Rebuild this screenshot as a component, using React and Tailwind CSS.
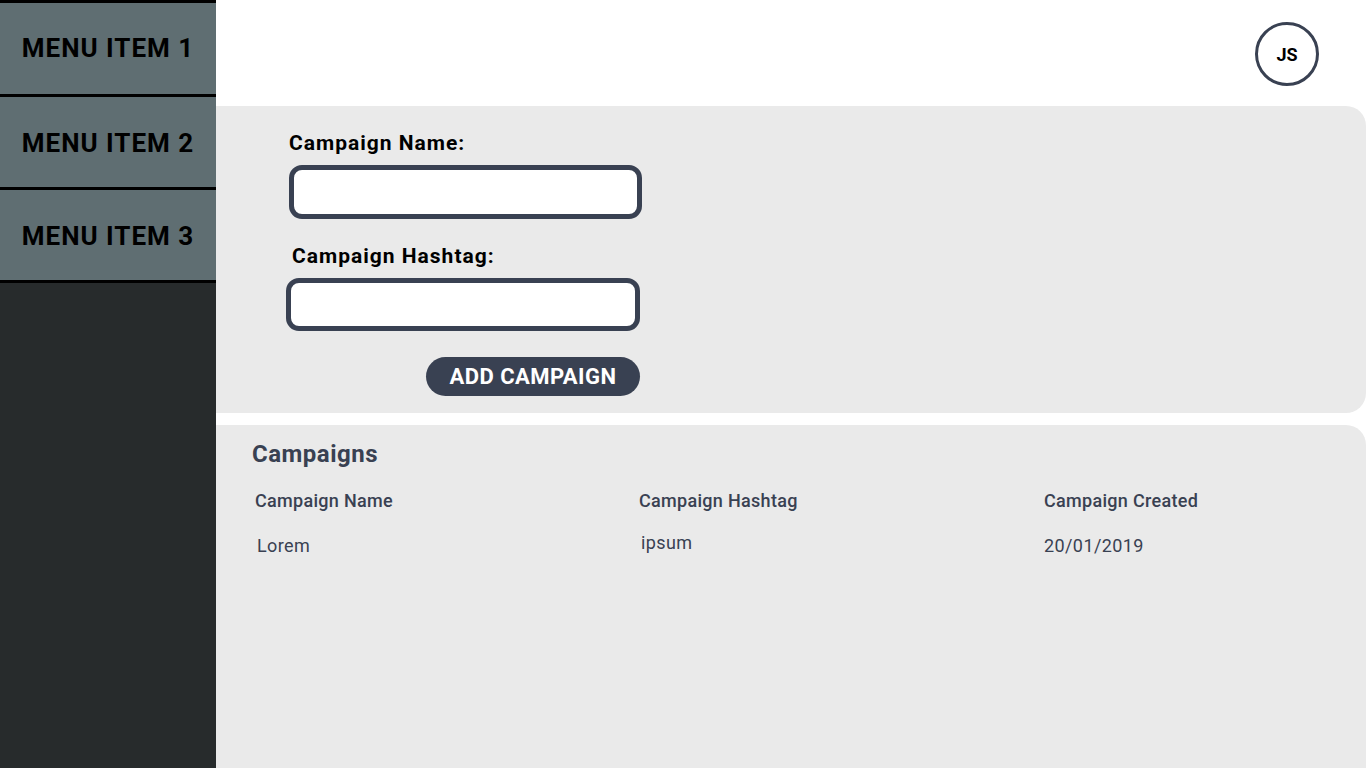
import React from 'react';

const menuItems = ['MENU ITEM 1', 'MENU ITEM 2', 'MENU ITEM 3'];

const campaigns = [
  { name: 'Lorem', hashtag: 'ipsum', created: '20/01/2019' },
];

const App = () => {
  return (
    <div
      className="flex h-[768px] w-[1366px] overflow-hidden bg-white"
      style={{ fontFamily: 'Roboto, "Liberation Sans", sans-serif' }}
    >
      {/* sidebar */}
      <aside className="w-[216px] shrink-0 bg-[#272b2c]">
        {menuItems.map((item, i) => (
          <div
            key={item}
            className={`flex items-center justify-center border-t-[3px] border-black bg-[#5f6e72] text-[26px] font-bold tracking-[1px] text-black ${
              i === 0 ? 'h-[94px]' : i === menuItems.length - 1 ? 'h-[96px] border-b-[3px] pt-[2px]' : 'h-[93px] pt-[2px]'
            }`}
          >
            {item}
          </div>
        ))}
      </aside>

      <main className="flex flex-1 flex-col">
        {/* top bar */}
        <header className="flex h-[106px] shrink-0 items-start justify-end pr-[47px] pt-[22px]">
          <div className="flex h-[64px] w-[64px] items-center justify-center rounded-full border-[3px] border-[#394152] text-[18px] font-bold text-black">
            JS
          </div>
        </header>

        {/* form */}
        <section className="h-[307px] shrink-0 rounded-r-[20px] bg-[#eaeaea] pl-[73px] pt-[24px]">
          <div className="flex w-[353px] flex-col">
            <label className="text-[21px] font-bold leading-[26px] tracking-[1px] text-black">Campaign Name:</label>
            <input
              type="text"
              className="mt-[9px] h-[54px] w-[353px] rounded-[13px] border-[5px] border-[#394152] bg-white outline-none"
            />
            <label className="ml-[3px] mt-[24px] text-[21px] font-bold leading-[26px] tracking-[1px] text-black">
              Campaign Hashtag:
            </label>
            <input
              type="text"
              className="-ml-[3px] mt-[9px] h-[53px] w-[354px] rounded-[13px] border-[5px] border-[#394152] bg-white outline-none"
            />
            <button className="ml-[137px] mt-[26px] h-[39px] w-[214px] rounded-full bg-[#394152] text-[22px] font-bold tracking-[0.45px] text-white">
              ADD CAMPAIGN
            </button>
          </div>
        </section>

        {/* list */}
        <section className="mt-[12px] flex-1 rounded-tr-[20px] bg-[#eaeaea] pl-[36px] pt-[13px] text-[#394152]">
          <h2 className="text-[24px] font-bold leading-[32px] tracking-[0.5px]">Campaigns</h2>
          <div className="mt-[20px] grid grid-cols-[384px_405px_1fr] pl-[3px] text-[18px] font-medium leading-[22px] tracking-[0.3px]">
            <div>Campaign Name</div>
            <div>Campaign Hashtag</div>
            <div>Campaign Created</div>
          </div>
          {campaigns.map((c) => (
            <div
              key={c.name}
              className="mt-[20px] grid grid-cols-[384px_405px_1fr] pl-[3px] text-[18px] leading-[22px] tracking-[0.4px]"
            >
              <div className="pl-[2px] pt-[3px]">{c.name}</div>
              <div className="pl-[2px]">{c.hashtag}</div>
              <div className="pt-[3px]">{c.created}</div>
            </div>
          ))}
        </section>
      </main>
    </div>
  );
};

export default App;
